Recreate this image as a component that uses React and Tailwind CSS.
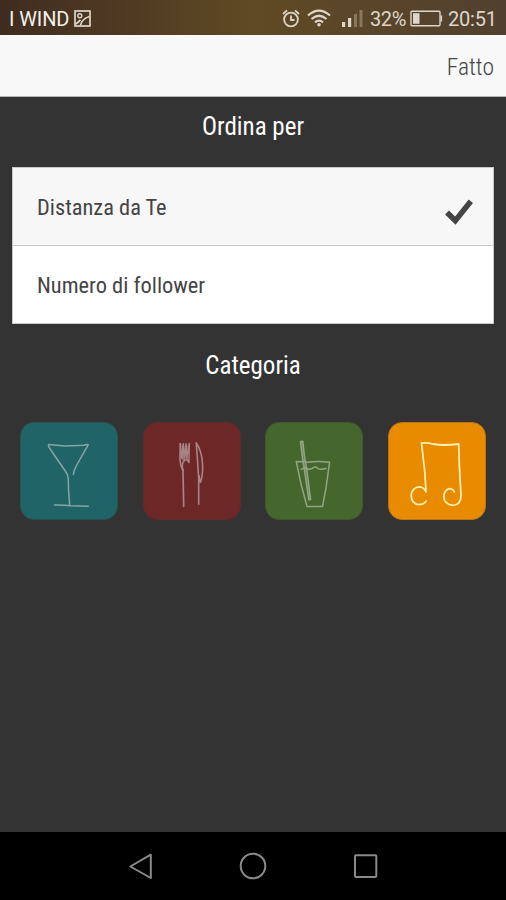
import React, { useState } from 'react';

const SORT_OPTIONS = [
  { key: 'distance', label: 'Distanza da Te' },
  { key: 'followers', label: 'Numero di follower' },
];

const CATEGORIES = [
  { key: 'drinks', tile: 'bg-[#206467] border-[#285356]', stroke: '#86a5a5' },
  { key: 'food', tile: 'bg-[#6d2726] border-[#5a2c2c]', stroke: '#a88484' },
  { key: 'soft', tile: 'bg-[#45662d] border-[#40572f]', stroke: '#94a586' },
  { key: 'music', tile: 'bg-[#e98b00] border-[#b97514]', stroke: '#fff0b0' },
];

/* Disegni delle categorie, viewBox 98x98 */
const DRAWINGS = {
  drinks: (
    <>
      <path d="M53.4 52.3 Q54 48 57 42.5 L68.3 22.6 Q67 22 64 23.3 L45 24 L28.5 22.6 Q28 24 29.5 26 L38 38.5 L45 48.5 Q48.2 52.5 48.3 57 L48.5 67 L49.6 82.5" />
      <path d="M34.5 83 Q41 82.6 51 83.7 L68.3 84.2" />
    </>
  ),
  food: (
    <>
      <path strokeWidth="1.7" d="M37.3 21.7 L37 38 Q37.4 43.5 40 48.5 L40.7 84.3" />
      <path d="M37.3 21.7 L38.8 36 L40.3 21.7 L41.3 37 L43 21.7 L43.6 37 L46.2 21.5 L46 40.7 L44 37.5 Q40 38.5 39.4 42.5 Q39 46 40.4 48.5" />
      <path d="M40 24 V38 M43.6 24 V37" />
      <path strokeWidth="1.6" d="M55.7 82.3 L55.7 57 L54.5 38 L53.2 20.7 Q59 29 59.6 43 Q60 53 57.5 60.3 Q56 58 56.3 54" />
    </>
  ),
  soft: (
    <>
      <path d="M40 39.8 L31.3 39.6 L36 62 L42 84.4 L57.5 84.4 L61 66 L64.6 40.2 Q53 39 41.5 40.2" />
      <path d="M36 47.5 Q39 45.5 41.5 46.5 Q45 48.5 48 45.8 Q51 44 53 46.6 Q56 48 61 46.5" />
      <path fill="#94a586" fillOpacity=".5" d="M35.5 19.5 L37.8 19.3 L39.3 33 L42 49 L45.6 77.5 L43.8 77.8 L40 52 L37 33 Z" />
    </>
  ),
  music: (
    <path
      strokeWidth="1.8"
      d="M38.2 79.3 Q35.5 82.6 31.5 82.6 C26.5 82.6 23.2 78.8 23.2 73.8 C23.2 68.6 27 64.8 31.5 64.8 Q35.5 65 38 69.8 L36.8 50 L33.5 21 Q40 20.6 45 22 Q55 24 70.7 22 L71.4 45 L73 73 Q72.8 83 65.5 83.3 Q55.8 82.5 55.8 74.5 Q56.5 67 62 66.6 Q65.5 67 66.3 70"
    />
  ),
};

function StatusBar() {
  return (
    <div className="h-[35px] flex items-center pt-px pl-[9px] pr-[9px] bg-linear-to-r from-[#3f2c20] via-[#604a23] to-[#51402f] text-[#ded6c9] font-['Roboto',sans-serif] [font-stretch:100%] text-[20px] leading-none">
      <span className="w-[60px] pt-[2px] text-[#f4efe8] whitespace-nowrap tracking-[-0.1px]">I WIND</span>
      <svg className="ml-[5px] w-[17px] h-[17px]" viewBox="0 0 17 17" fill="none" stroke="currentColor" strokeWidth="1.7">
        <rect x="1" y="1" width="15" height="15" />
        <circle cx="5.8" cy="5.8" r="2" strokeWidth="1.4" />
        <path d="M2 14 L6.5 10 M6.5 15.5 Q8 8.5 15.5 6.5" />
      </svg>
      <div className="ml-auto flex items-center">
        <svg className="w-[18px] h-[19px]" viewBox="0 0 18 19" fill="none" stroke="currentColor" strokeWidth="1.8">
          <circle cx="9" cy="10.5" r="6.9" />
          <path d="M1 5 L5 1.4 M17 5 L13 1.4 M9 6.5 V11 H12.5" />
        </svg>
        <svg className="ml-[7px] w-[24px] h-[18px]" viewBox="0 0 24 18" fill="none" stroke="currentColor" strokeWidth="2.2">
          <path d="M1 6.5 Q12 -3.3 23 6.5 M4.5 10 Q12 3.5 19.5 10 M8 13.3 Q12 9.8 16 13.3" />
          <circle cx="12" cy="15.7" r="1.8" fill="currentColor" stroke="none" />
        </svg>
        <svg className="ml-[11px] w-[21px] h-[18px]" viewBox="0 0 21 18" fill="currentColor">
          <rect x="0" y="13" width="3.2" height="5" />
          <rect x="6" y="9" width="3.2" height="9" />
          <rect x="12" y="5" width="3" height="13" opacity=".35" />
          <rect x="17.5" y="1" width="3" height="17" opacity=".35" />
        </svg>
        <span className="ml-[7px] w-[37px] pt-[2px] whitespace-nowrap tracking-[-0.4px]">32%</span>
        <svg className="ml-[3px] w-[33px] h-[17px]" viewBox="0 0 33 17" fill="none" stroke="currentColor" strokeWidth="1.4">
          <rect x="1" y="1.2" width="29" height="14.6" rx="1" />
          <rect x="3" y="3.2" width="6.5" height="10.6" fill="currentColor" stroke="none" />
          <path d="M31.3 5.5 V11.5" strokeWidth="1.6" />
        </svg>
        <span className="ml-[5px] w-[49px] pt-[2px] whitespace-nowrap tracking-[-0.2px]">20:51</span>
      </div>
    </div>
  );
}

function NavBar() {
  return (
    <div className="h-[68px] bg-black">
      <svg className="block w-[506px] h-[68px]" viewBox="0 0 506 68" fill="none" stroke="#8a8a8a" strokeWidth="2" strokeLinejoin="round">
        <path d="M130.3 34.5 L150.8 22.7 V46 Z" />
        <circle cx="253" cy="34" r="12.3" />
        <rect x="355" y="23.3" width="21.3" height="21.8" rx="1" />
      </svg>
    </div>
  );
}

function App() {
  const [sortBy, setSortBy] = useState('distance');
  const [category, setCategory] = useState('music');

  return (
    <div className="w-[506px] h-[900px] flex flex-col overflow-hidden bg-[#333333] font-['Roboto_Condensed','Roboto',sans-serif] [font-stretch:75%]">
      <StatusBar />
      <header className="h-[62px] flex items-center justify-end pt-[5px] pr-3 bg-[#f8f8f8] border-b border-[#b5b5b5]">
        <button type="button" className="text-[23.5px] leading-none font-light text-[#444444]">Fatto</button>
      </header>

      <main className="flex-1 flex flex-col">
        <h2 className="h-[70px] pt-[15px] text-center text-[25px] leading-[30px] text-white">Ordina per</h2>
        <div className="mx-[12px] h-[157px] bg-white border border-[#c9c9c9] flex flex-col">
          {SORT_OPTIONS.map((o) => (
            <button
              key={o.key}
              type="button"
              onClick={() => setSortBy(o.key)}
              className={`h-[78px] pt-[3px] pl-6 pr-5 flex items-center justify-between text-[22.4px] text-[#444444] ${
                sortBy === o.key ? 'bg-[#f7f7f7] border-b border-[#cccccc]' : 'bg-white'
              }`}
            >
              <span>{o.label}</span>
              {sortBy === o.key && (
                <svg className="mt-[9px] w-[28px] h-[26px]" viewBox="0 0 28 26" fill="none" stroke="#444444" strokeWidth="5.5">
                  <path d="M2 13.6 L10.3 21.6 L25.8 2.2" />
                </svg>
              )}
            </button>
          ))}
        </div>
        <h2 className="h-[98px] pt-[27px] text-center text-[25px] leading-[30px] text-white">Categoria</h2>
        <div className="px-5 flex justify-between">
          {CATEGORIES.map((c) => (
            <button
              key={c.key}
              type="button"
              onClick={() => setCategory(c.key)}
              aria-pressed={category === c.key}
              className={`w-[98px] h-[98px] rounded-[14px] border ${c.tile}`}
            >
              <svg className="block w-full h-full" viewBox="1 1 96 96" fill="none" stroke={c.stroke} strokeWidth="1.5" strokeLinecap="round" strokeLinejoin="round">
                {DRAWINGS[c.key]}
              </svg>
            </button>
          ))}
        </div>
      </main>
      <NavBar />
    </div>
  );
}

export default App;
